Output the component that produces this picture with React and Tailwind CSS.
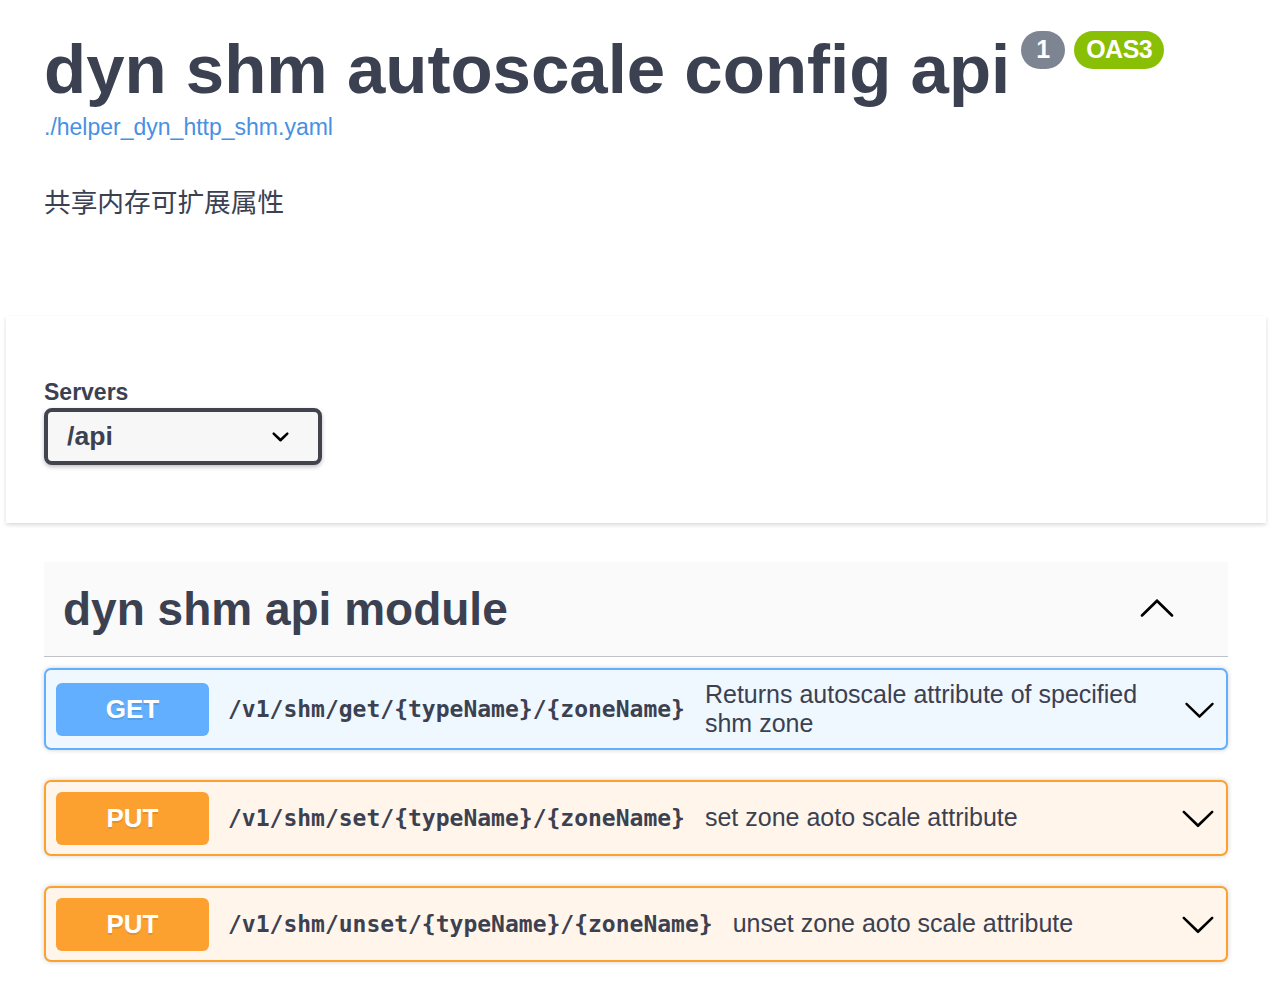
import React from 'react';

const ARROW = "M17.418 6.109c.272-.268.709-.268.979 0s.271.701 0 .969l-7.908 7.83c-.27.268-.707.268-.979 0l-7.908-7.83c-.27-.268-.27-.701 0-.969.271-.268.709-.268.979 0L10 13.25l7.418-7.141z";
const SELECT_ARROW = "M13.418 7.859a.695.695 0 01.978 0 .68.68 0 010 .969l-3.908 3.83a.697.697 0 01-.979 0l-3.908-3.83a.68.68 0 010-.969.695.695 0 01.978 0L10 11l3.418-3.141z";

const operations = [
  { method: 'GET', path: '/v1/shm/get/{typeName}/{zoneName}', summary: 'Returns autoscale attribute of specified shm zone' },
  { method: 'PUT', path: '/v1/shm/set/{typeName}/{zoneName}', summary: 'set zone aoto scale attribute' },
  { method: 'PUT', path: '/v1/shm/unset/{typeName}/{zoneName}', summary: 'unset zone aoto scale attribute' },
];

const methodStyles = {
  GET: { block: 'border-[#61affe] bg-[#eff7ff]', badge: 'bg-[#61affe]', arrow: 'h-[33px] w-[33px]' },
  PUT: { block: 'border-[#fca130] bg-[#fff5ea]', badge: 'bg-[#fca130]', arrow: 'h-[36px] w-[36px]' },
};

function Operation({ method, path, summary }) {
  const s = methodStyles[method];
  return (
    <div className={`flex items-center rounded-[7px] border-2 px-[10px] py-[9.5px] shadow-[0_0_5px_rgba(0,0,0,0.19)] ${s.block}`}>
      <span className={`flex h-[53px] w-[153px] shrink-0 items-center justify-center rounded-[6px] text-[26px] font-bold text-white [text-shadow:0_2px_0_rgba(0,0,0,0.1)] ${s.badge}`}>
        {method}
      </span>
      <span className="ml-[19px] shrink-0 font-['DejaVu_Sans_Mono',monospace] text-[23px] font-bold">{path}</span>
      <span className="ml-[20px] flex-1 text-[25px] leading-[29.5px]">{summary}</span>
      <svg viewBox="0 0 20 20" className={`shrink-0 fill-black ${s.arrow}`}>
        <path d={ARROW} />
      </svg>
    </div>
  );
}

export default function App() {
  return (
    <div className="min-h-screen bg-white font-['Liberation_Sans',Arial,sans-serif] text-[#3b4151]">
      <div className="mx-[6px] w-[1260px]">
        <div className="px-[38px] pt-[30px]">
          <div className="flex items-start">
            <h1 className="whitespace-nowrap text-[69px] font-bold leading-[79px]">dyn shm autoscale config api</h1>
            <div className="ml-[11px] mt-px flex gap-[9px]">
              <span className="flex h-[38px] w-[44px] items-center justify-center rounded-full bg-[#7d8492] text-[25px] font-bold text-white">1</span>
              <span className="flex h-[38px] w-[90px] items-center justify-center rounded-full bg-[#89bf04] text-[25px] font-bold tracking-[-0.5px] text-white">OAS3</span>
            </div>
          </div>
          <a className="mt-[4px] block text-[23px] leading-[28px] text-[#4990e2]">./helper_dyn_http_shm.yaml</a>
          <p className="mt-[42px] font-['Noto_Sans_CJK_SC',sans-serif] text-[26.7px] leading-[36px]">共享内存可扩展属性</p>
        </div>

        <section className="mt-[97px] bg-white px-[38px] pb-[58px] pt-[63px] shadow-[0_2px_4px_rgba(0,0,0,0.15)]">
          <div className="text-[23px] font-bold leading-[27px]">Servers</div>
          <div className="mt-[2px] flex h-[57px] w-[278px] items-center justify-between rounded-[8px] border-4 border-[#41444e] bg-[#f7f7f7] pl-[19px] pr-[20px] shadow-[0_2px_4px_rgba(0,0,0,0.25)]">
            <span className="text-[26.6px] font-bold">/api</span>
            <svg viewBox="0 0 20 20" className="h-[35px] w-[35px] fill-black">
              <path d={SELECT_ARROW} />
            </svg>
          </div>
        </section>

        <div className="mt-[39px] px-[38px]">
          <div className="flex h-[95px] items-center justify-between border-b border-[rgba(59,65,81,0.3)] bg-[#fafafa] pl-[19px] pr-[52px]">
            <h2 className="text-[46px] font-bold">dyn shm api module</h2>
            <svg viewBox="0 0 20 20" className="h-[38px] w-[38px] rotate-180 fill-black">
              <path d={ARROW} />
            </svg>
          </div>
          <div className="mt-[11px] flex flex-col gap-[30px]">
            {operations.map(op => (
              <Operation key={op.path} {...op} />
            ))}
          </div>
        </div>
      </div>
    </div>
  );
}
